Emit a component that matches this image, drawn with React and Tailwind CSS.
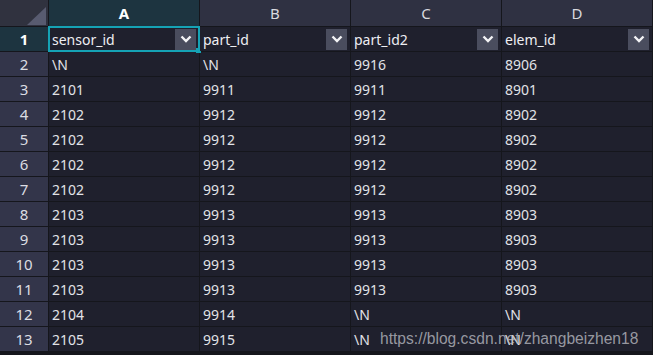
import React from 'react'

const cols = ['A', 'B', 'C', 'D']
const headers = ['sensor_id', 'part_id', 'part_id2', 'elem_id']
const rows = [
    ['\\N', '\\N', '9916', '8906'],
    ['2101', '9911', '9911', '8901'],
    ['2102', '9912', '9912', '8902'],
    ['2102', '9912', '9912', '8902'],
    ['2102', '9912', '9912', '8902'],
    ['2102', '9912', '9912', '8902'],
    ['2103', '9913', '9913', '8903'],
    ['2103', '9913', '9913', '8903'],
    ['2103', '9913', '9913', '8903'],
    ['2103', '9913', '9913', '8903'],
    ['2104', '9914', '\\N', '\\N'],
    ['2105', '9915', '\\N', '\\N'],
]

function Chevron() {
    return (
        <div className="w-[21px] h-[21px] bg-[#4a4d5e] flex items-center justify-center">
            <svg width="12" height="8" viewBox="0 0 12 8">
                <path d="M1.5 1.5 L6 6 L10.5 1.5" fill="none" stroke="#f4f4f6" strokeWidth="2.4" />
            </svg>
        </div>
    )
}

export default function App() {
    return (
        <div className="relative w-[653px] h-[355px] bg-[#15161c] overflow-hidden" style={{ fontFamily: '"Noto Sans", "Open Sans", sans-serif' }}>
            <div className="grid grid-cols-[48px_150px_150px_150px_150px] grid-rows-[26px] auto-rows-[24px] gap-px text-[14px] text-[#e2e3e8]">
                {/* corner */}
                <div className="relative bg-[#30323f]">
                    <svg className="absolute left-[27px] top-[7px]" width="19" height="18" viewBox="0 0 19 18">
                        <polygon points="19,0 19,18 0,18" fill="#585b70" />
                    </svg>
                </div>
                {cols.map((c, i) => (
                    <div key={c} className={`flex items-center justify-center text-[15px] ${i === 0 ? 'bg-[#1d3440] font-bold text-white' : 'bg-[#2f3142] text-[#d8d9df]'}`}>{c}</div>
                ))}

                {/* row 1 */}
                <div className="flex items-center justify-center bg-[#1d3440] font-bold text-white text-[15px]">1</div>
                {headers.map((h, i) => (
                    <div key={h} className="relative flex items-center justify-between bg-[#1f202d] pl-[3px] pr-[3px]">
                        <span className="text-[#eeeef2]">{h}</span>
                        <Chevron />
                        {i === 0 && (
                            <div className="absolute -left-px -top-px w-[152px] h-[26px] border-2 border-[#15a3b5]">
                                <div className="absolute -right-[3px] -bottom-[3px] w-[5px] h-[5px] bg-[#15a3b5]" />
                            </div>
                        )}
                    </div>
                ))}

                {rows.map((r, ri) => (
                    <React.Fragment key={ri}>
                        <div className="flex items-center justify-center bg-[#33354a] text-[15px] text-[#dcdde3]">{ri + 2}</div>
                        {r.map((v, ci) => (
                            <div key={ci} className="flex items-center bg-[#1f202d] pl-[3px]">{v}</div>
                        ))}
                    </React.Fragment>
                ))}
            </div>

            {/* watermark laid over the table */}
            <div className="absolute left-[380px] top-[327px] text-[15.6px] text-[#b8b9c0]/80" style={{ fontFamily: '"Liberation Sans", Arial, sans-serif' }}>
                https://blog.csdn.net/zhangbeizhen18
            </div>
        </div>
    )
}
